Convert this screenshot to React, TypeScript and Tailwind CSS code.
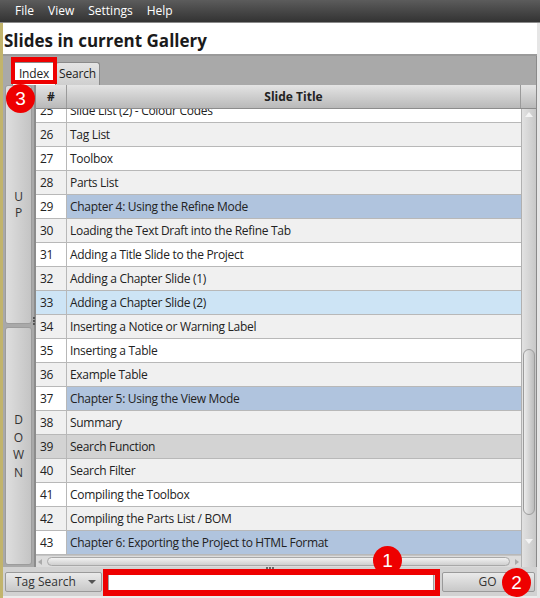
import React from "react";

type Row = [number, string, "w" | "g" | "c" | "s" | "h"];

const rows: Row[] = [
  [25, "Slide List (2) - Colour Codes", "w"],
  [26, "Tag List", "g"],
  [27, "Toolbox", "w"],
  [28, "Parts List", "g"],
  [29, "Chapter 4: Using the Refine Mode", "c"],
  [30, "Loading the Text Draft into the Refine Tab", "g"],
  [31, "Adding a Title Slide to the Project", "w"],
  [32, "Adding a Chapter Slide (1)", "g"],
  [33, "Adding a Chapter Slide (2)", "s"],
  [34, "Inserting a Notice or Warning Label", "g"],
  [35, "Inserting a Table", "w"],
  [36, "Example Table", "g"],
  [37, "Chapter 5: Using the View Mode", "c"],
  [38, "Summary", "g"],
  [39, "Search Function", "h"],
  [40, "Search Filter", "g"],
  [41, "Compiling the Toolbox", "w"],
  [42, "Compiling the Parts List / BOM", "g"],
  [43, "Chapter 6: Exporting the Project to HTML Format", "c"],
];

const numBg: Record<string, string> = {
  w: "bg-white",
  g: "bg-[#f0f0f0]",
  c: "bg-white",
  s: "bg-[#cde4f5]",
  h: "bg-[#d3d3d3]",
};
const titleBg: Record<string, string> = {
  w: "bg-white",
  g: "bg-[#f0f0f0]",
  c: "bg-[#b0c4de]",
  s: "bg-[#cde4f5]",
  h: "bg-[#d3d3d3]",
};

function Badge({ n, className }: { n: string; className: string }) {
  return (
    <div
      className={
        "absolute w-[29px] h-[29px] rounded-full bg-[#ee0000] text-white flex items-center justify-center text-[19px] leading-none font-['Liberation_Sans',sans-serif] " +
        className
      }
    >
      {n}
    </div>
  );
}

export default function App() {
  return (
    <div className="relative w-[540px] h-[598px] overflow-hidden flex flex-col bg-[#e6e6e6] font-['Open_Sans',sans-serif] text-[#222]">
      {/* menu bar */}
      <div className="h-[23px] shrink-0 flex items-center bg-gradient-to-b from-[#5c5c5c] to-[#333333] border-b border-[#8a8a8a] text-white text-[12px] pl-[15px] gap-[14px]">
        <span>File</span>
        <span>View</span>
        <span>Settings</span>
        <span>Help</span>
      </div>

      <div className="flex-1 flex flex-col border-l-[3px] border-[#c2b46c] pr-[3px]">
        {/* title */}
        <div className="h-[33px] shrink-0 bg-white flex items-end pb-[5px] pl-[1px] border-b-2 border-[#9a9a9a]">
          <span className="text-[17px] font-bold leading-none text-[#1a1a1a]">
            Slides in current Gallery
          </span>
        </div>

        {/* main panel */}
        <div className="flex-1 flex flex-col bg-[#a9a9a9] border-r border-[#8a8a8a]">
          {/* tabs */}
          <div className="h-[29px] shrink-0 flex items-end pl-[9px]">
            <div className="h-[23px] w-[44px] bg-white border border-b-0 border-[#8a8a8a] rounded-t-[3px] flex items-center justify-center text-[12px] tracking-[-0.2px]">
              Index
            </div>
            <div className="h-[23px] w-[44px] bg-gradient-to-b from-[#e4e4e4] to-[#cfcfcf] border border-l-0 border-b-0 border-[#8a8a8a] rounded-t-[3px] flex items-center justify-center text-[12px] tracking-[-0.2px]">
              Search
            </div>
          </div>

          {/* body */}
          <div className="flex-1 flex pl-[2px]">
            {/* up / down column */}
            <div className="w-[29px] shrink-0 flex flex-col pr-[2px] relative">
              <div className="h-[239px] rounded-[3px] bg-gradient-to-r from-[#dedede] to-[#c4c4c4] border border-[#9c9c9c] flex flex-col items-center justify-center text-[12px] leading-[16px] text-[#333] pt-[1px]">
                <span>U</span>
                <span>P</span>
              </div>
              <div className="h-[3px]" />
              <div className="flex-1 mb-[2px] rounded-[3px] bg-gradient-to-r from-[#dedede] to-[#c4c4c4] border border-[#9c9c9c] flex flex-col items-center justify-center text-[12px] leading-[17.5px] text-[#333]">
                <span>D</span>
                <span>O</span>
                <span>W</span>
                <span>N</span>
              </div>
              <div className="absolute right-[-1px] top-[232px] flex flex-col gap-[1px]">
                <div className="w-[2px] h-[2px] bg-[#555]" />
                <div className="w-[2px] h-[2px] bg-[#555]" />
                <div className="w-[2px] h-[2px] bg-[#555]" />
              </div>
            </div>

            {/* table */}
            <div className="flex-1 flex flex-col border-l-2 border-[#8c8c8c] bg-white">
              {/* header */}
              <div className="h-[24px] shrink-0 flex border-b border-[#8c8c8c]">
                <div className="w-[31px] shrink-0 bg-gradient-to-b from-[#e4e4e4] to-[#b9b9b9] border-r border-[#9a9a9a] flex items-center justify-center text-[12px] font-bold">
                  #
                </div>
                <div className="flex-1 bg-gradient-to-b from-[#e4e4e4] to-[#b9b9b9] border-r border-[#9a9a9a] flex items-center justify-center text-[12px] font-bold">
                  Slide Title
                </div>
                <div className="w-[15px] shrink-0 bg-gradient-to-b from-[#e4e4e4] to-[#b9b9b9]" />
              </div>

              <div className="flex-1 flex min-h-0">
                {/* rows */}
                <div className="flex-1 flex flex-col min-w-0">
                  <div className="flex-1 overflow-hidden">
                    <div className="-mt-[10px]">
                      {rows.map(([n, t, k]) => (
                        <div key={n} className="h-[24px] flex border-b border-[#b8b8b8] text-[12px] tracking-[-0.3px]">
                          <div className={"w-[31px] shrink-0 border-r border-[#b8b8b8] pl-[4px] flex items-center " + numBg[k]}>
                            {n}
                          </div>
                          <div className={"flex-1 pl-[3px] flex items-center whitespace-nowrap " + titleBg[k]}>
                            {t}
                          </div>
                        </div>
                      ))}
                    </div>
                  </div>
                  {/* horizontal scrollbar */}
                  <div className="h-[12px] shrink-0 bg-[#dcdcdc] border-t border-[#c4c4c4] flex items-center px-[2px] gap-[1px]">
                    <div className="w-0 h-0 border-y-[3px] border-y-transparent border-r-[4px] border-r-[#aaa]" />
                    <div className="flex-1 h-[9px] mx-[4px] rounded-full bg-gradient-to-b from-[#f2f2f2] to-[#cfcfcf] border border-[#a8a8a8]" />
                    <div className="w-0 h-0 border-y-[3px] border-y-transparent border-l-[4px] border-l-[#aaa]" />
                  </div>
                </div>
                {/* vertical scrollbar */}
                <div className="w-[15px] shrink-0 flex flex-col bg-gradient-to-r from-[#e2e2e2] to-[#c8c8c8] border-l border-[#b0b0b0]">
                  <div className="h-[10px] flex items-center justify-center">
                    <div className="w-0 h-0 border-x-[4px] border-x-transparent border-b-[5px] border-b-[#f4f4f4]" />
                  </div>
                  <div className="h-[230px]" />
                  <div className="h-[166px] mx-[1px] rounded-full bg-gradient-to-r from-[#ececec] to-[#bdbdbd] border border-[#9c9c9c]" />
                  <div className="flex-1 flex items-center justify-center">
                    <div className="w-0 h-0 border-x-[4px] border-x-transparent border-t-[5px] border-t-[#f4f4f4]" />
                  </div>
                </div>
              </div>
            </div>
          </div>
        </div>

        {/* bottom bar */}
        <div className="relative h-[31px] shrink-0 flex items-center bg-[#d2d2d2] pl-[2px] pr-[2px] border-b-2 border-[#ececec]">
          <div className="absolute left-[263px] top-0 flex gap-[1px]">
            <div className="w-[2px] h-[2px] bg-[#666]" />
            <div className="w-[2px] h-[2px] bg-[#666]" />
            <div className="w-[2px] h-[2px] bg-[#666]" />
          </div>
          <div className="w-[97px] h-[20px] rounded-[2px] bg-gradient-to-b from-[#eaeaea] to-[#c8c8c8] border border-[#9a9a9a] flex items-center pl-[9px] pr-[5px] text-[12px] text-[#333]">
            <span className="flex-1">Tag Search</span>
            <div className="w-0 h-0 border-x-[4px] border-x-transparent border-t-[4px] border-t-[#555]" />
          </div>
          <div className="w-[326px] h-[18px] bg-white border border-[#a0a0a0] ml-[6px]" />
          <div className="flex-1 ml-[8px] h-[20px] rounded-[2px] bg-gradient-to-b from-[#eaeaea] to-[#c8c8c8] border border-[#9a9a9a] flex items-center justify-center text-[12px] text-[#333] pr-[2px]">
            GO
          </div>
        </div>
      </div>

      {/* annotations */}
      <div className="absolute left-[11px] top-[57px] w-[46px] h-[27px] border-[4px] border-t-[5px] border-[#ee0000]" />
      <div className="absolute left-[103px] top-[569px] w-[337px] h-[27px] border-[5px] border-y-[6px] border-[#ee0000]" />
      <Badge n="3" className="left-[6px] top-[84px]" />
      <Badge n="1" className="left-[373px] top-[546px]" />
      <Badge n="2" className="left-[502px] top-[568px]" />
    </div>
  );
}
